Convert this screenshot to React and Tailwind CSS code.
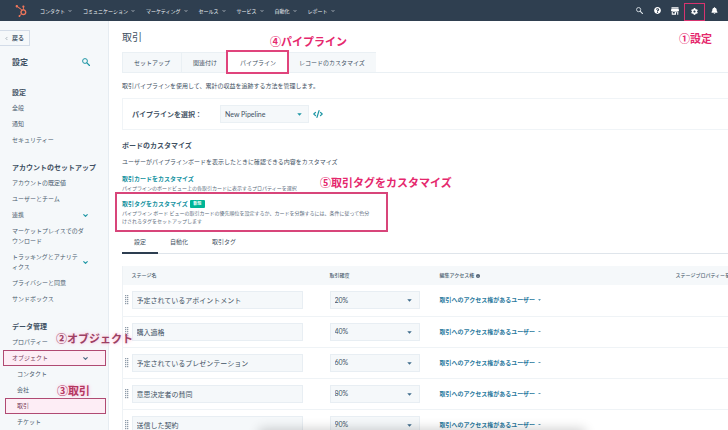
import React from "react";
import { FaHubspot, FaQuestionCircle, FaCog, FaBell } from "react-icons/fa";
import { ChevronDown, ChevronLeft, CodeXml } from "lucide-react";

const menus = [
  "コンタクト",
  "コミュニケーション",
  "マーケティング",
  "セールス",
  "サービス",
  "自動化",
  "レポート",
];

const sections = [
  {
    title: "設定",
    items: [{ label: "全般" }, { label: "通知" }, { label: "セキュリティー" }],
  },
  {
    title: "アカウントのセットアップ",
    items: [
      { label: "アカウントの既定値" },
      { label: "ユーザーとチーム" },
      { label: "連携", open: true },
      { label: "マーケットプレイスでのダウンロード" },
      { label: "トラッキングとアナリティクス", open: true },
      { label: "プライバシーと同意" },
      { label: "サンドボックス" },
    ],
  },
  {
    title: "データ管理",
    items: [
      { label: "プロパティー" },
      { label: "オブジェクト", open: true, marked: true },
      { label: "コンタクト", sub: true },
      { label: "会社", sub: true },
      { label: "取引", sub: true, marked: true },
      { label: "チケット", sub: true },
    ],
  },
];

const stages = [
  { name: "予定されているアポイントメント", probability: "20%" },
  { name: "購入適格", probability: "40%" },
  { name: "予定されているプレゼンテーション", probability: "60%" },
  { name: "意思決定者の賛同", probability: "80%" },
  { name: "送信した契約", probability: "90%" },
];

const Caret = ({ className }) => (
  <svg viewBox="0 0 10 6" className={className} fill="currentColor">
    <path d="M0.5 0.5h9L5 5.5z" />
  </svg>
);

const SearchIcon = ({ className }) => (
  <svg viewBox="0 0 16 16" className={className} fill="none" stroke="currentColor">
    <circle cx="6" cy="6" r="4.8" strokeWidth="2" />
    <path d="M9.8 9.8L15 15" strokeWidth="2.6" strokeLinecap="round" />
  </svg>
);

const StoreIcon = ({ className }) => (
  <svg viewBox="0 0 16 16" className={className} fill="currentColor">
    <path d="M1 0.5h14v2H1z" />
    <path d="M1 3h14l1 3.5a2 2 0 0 1-3.6 1.3 2.6 2.6 0 0 1-4.4 0 2.6 2.6 0 0 1-4.4 0A2 2 0 0 1 0 6.5z" />
    <path
      d="M1.5 9h13v6.500h-13z M3.500 10v3h4v-3z M10 10.500v5h2.500v-5z"
      fillRule="evenodd"
    />
  </svg>
);

const TopNav = () => (
  <header className="flex h-[21px] shrink-0 items-center bg-[#2f3f50] pl-[15px] pr-[5px]">
    <a href="#home" aria-label="HubSpot" className="w-[25px] text-[#f0765b]">
      <FaHubspot className="size-[12px]" />
    </a>
    <nav className="flex flex-1 gap-[11px]">
      {menus.map((menu) => (
        <button
          key={menu}
          className="flex items-center gap-[3px] whitespace-nowrap text-[5px] leading-[10px] text-[#eef2f5]"
        >
          {menu}
          <ChevronDown className="size-[4px]" strokeWidth={4} />
        </button>
      ))}
    </nav>
    <div className="flex items-center text-white">
      <button aria-label="検索" className="flex w-[18px] justify-center">
        <SearchIcon className="size-[7px] text-[#dde3e9]" />
      </button>
      <button aria-label="ヘルプ" className="flex w-[18px] justify-center">
        <FaQuestionCircle className="size-[7px]" />
      </button>
      <button aria-label="マーケットプレイス" className="flex w-[18px] justify-center">
        <StoreIcon className="size-[8px]" />
      </button>
      <button
        aria-label="設定"
        className="mt-[3px] flex h-[18px] w-[21px] items-center justify-center border border-[#d8336f] pb-[2px]"
      >
        <FaCog className="size-[7px]" />
      </button>
      <button aria-label="お知らせ" className="flex w-[18px] justify-center">
        <FaBell className="size-[7px]" />
      </button>
    </div>
  </header>
);

const SidebarItem = ({ item }) => (
  <li>
    <a
      href="#settings"
      className={`mr-[2px] flex items-center py-[3px] text-[6px] leading-[10px] ${
        item.sub ? "ml-[5px] pl-[12px]" : "ml-[3px] pl-[9px]"
      } ${
        item.marked
          ? "bg-[#fdedf5] text-[#7a3f5c] outline-[1px] -outline-offset-1 outline-[#b04a72] outline-solid"
          : "text-[#4a5c6e]"
      }`}
    >
      <span className={item.open ? "w-[70px] break-all" : "w-[75px] break-all"}>
        {item.label}
      </span>
      {item.open && (
        <ChevronDown
          className={`size-[7px] ${item.marked ? "text-[#4f6a86]" : "text-[#1f97a5]"}`}
          strokeWidth={4}
        />
      )}
    </a>
  </li>
);

const Sidebar = () => (
  <aside className="w-[109px] shrink-0 overflow-hidden border-r border-[#e6ecf1] bg-[#f5f8fa]">
    <button className="mt-[9px] flex h-[16px] w-[30px] items-center gap-[3px] border border-l-0 border-[#d3dce8] pl-[4px] text-[6px] leading-[10px] font-bold text-[#4a5c6e]">
      <ChevronLeft className="size-[5px]" strokeWidth={2} />
      戻る
    </button>
    <div className="mt-[10px] flex items-center justify-between pl-[12px] pr-[18px]">
      <h2 className="text-[8px] leading-[12px] font-bold text-[#3f5163]">設定</h2>
      <button aria-label="設定を検索">
        <SearchIcon className="size-[8px] text-[#1f97a5]" />
      </button>
    </div>
    <div className="mt-[16px] flex flex-col gap-[11px]">
      {sections.map((section) => (
        <section key={section.title}>
          <h3 className="pl-[12px] text-[7px] leading-[16px] font-bold whitespace-nowrap text-[#3f5163]">
            {section.title}
          </h3>
          <ul>
            {section.items.map((item) => (
              <SidebarItem key={item.label} item={item} />
            ))}
          </ul>
        </section>
      ))}
    </div>
  </aside>
);

const StageTable = () => (
  <table className="mt-[12px] w-full table-fixed border-l border-[#eef2f5] text-left whitespace-nowrap">
    <colgroup>
      <col className="w-[9px]" />
      <col className="w-[198px]" />
      <col className="w-[110px]" />
      <col className="w-[236px]" />
      <col />
    </colgroup>
    <thead className="bg-[#f5f8fa]">
      <tr className="h-[19px] text-[5px] text-[#4a5c6e]">
        <th />
        <th className="font-medium">ステージ名</th>
        <th className="font-medium">取引確度</th>
        <th className="font-medium">
          <span className="flex items-center gap-[2px]">
            編集アクセス権
            <svg viewBox="0 0 10 10" className="size-[4px]">
              <circle cx="5" cy="5" r="5" fill="#4a5c6e" />
              <path d="M5 4.5v3.5M5 2v1.2" stroke="#fff" strokeWidth="1.4" />
            </svg>
          </span>
        </th>
        <th className="font-medium">ステージプロパティーを</th>
      </tr>
    </thead>
    <tbody>
      {stages.map((stage) => (
        <tr key={stage.name} className="h-[31px] border-b border-[#eff3f6]">
          <td>
            <svg viewBox="0 0 4 10" className="ml-[2px] h-[10px] w-[4px]" fill="#8f9ca9">
              {[0, 2, 4, 6, 8].map((y) => (
                <g key={y}>
                  <rect x="0" y={y} width="1.3" height="1.2" />
                  <rect x="2" y={y} width="1.3" height="1.2" />
                </g>
              ))}
            </svg>
          </td>
          <td>
            <input
              aria-label="ステージ名"
              defaultValue={stage.name}
              className="block h-[18px] w-[171px] border border-[#e8eef3] bg-[#f5f8fa] px-[4px] text-[7px] text-[#3f5163]"
            />
          </td>
          <td>
            <div className="relative w-[90px]">
              <select
                aria-label="取引確度"
                className="block h-[18px] w-full appearance-none border border-[#e8eef3] bg-[#f5f8fa] px-[4px] text-[7px] text-[#3f5163]"
              >
                <option>{stage.probability}</option>
              </select>
              <Caret className="absolute top-[8px] right-[8px] w-[5px] text-[#3f6c8c]" />
            </div>
          </td>
          <td>
            <button className="flex items-center gap-[3px] text-[6px] leading-[10px] font-bold text-[#2b7a9e]">
              取引へのアクセス権があるユーザー
              <Caret className="w-[3px]" />
            </button>
          </td>
          <td />
        </tr>
      ))}
    </tbody>
  </table>
);

const Note = ({ children, className }) => (
  <p
    className={`pointer-events-none absolute font-['Noto_Sans_CJK_JP',sans-serif] text-[11px] leading-[16px] font-bold whitespace-nowrap ${className}`}
  >
    {children}
  </p>
);

const App = () => {
  return (
    <div className="relative flex h-screen flex-col overflow-hidden bg-white font-['Lato','Noto_Sans_CJK_JP',sans-serif] text-[#3f5163]">
      <TopNav />
      <div className="flex min-h-0 flex-1">
        <Sidebar />
        <main className="min-w-0 flex-1 overflow-hidden pl-[13px]">
          <h1 className="mt-[8px] text-[10px] leading-[16px]">取引</h1>

          <div className="mt-[7px] flex border-b border-[#eaf0f4] text-[6px]">
            {["セットアップ", "関連付け", "パイプライン", "レコードのカスタマイズ"].map((tab) => (
              <button
                key={tab}
                className={`h-[20px] border-t border-l px-[11px] whitespace-nowrap ${
                  tab === "パイプライン"
                    ? "relative z-10 border-white bg-white outline-2 outline-[#e0447c]"
                    : "border-[#eaf0f4] bg-[#f5f8fa]"
                }`}
              >
                {tab}
              </button>
            ))}
          </div>

          <p className="mt-[7px] text-[6px] leading-[12px]">
            取引パイプラインを使用して、累計の収益を追跡する方法を管理します。
          </p>

          <div className="mt-[6px] flex items-center border border-r-0 border-[#f0f4f7] py-[6px] pl-[9px]">
            <label htmlFor="pipeline" className="w-[88px] text-[7px] font-bold">
              パイプラインを選択：
            </label>
            <div className="relative w-[89px]">
              <select
                id="pipeline"
                className="block h-[18px] w-full appearance-none border border-[#eaf0f4] bg-[#f5f8fa] px-[4px] text-[7px]"
              >
                <option>New Pipeline</option>
              </select>
              <Caret className="absolute top-[8px] right-[7px] w-[5px] text-[#1f97a5]" />
            </div>
            <button aria-label="コード" className="ml-[4px] text-[#1f97a5]">
              <CodeXml className="size-[10px]" strokeWidth={3} />
            </button>
          </div>

          <h2 className="mt-[9px] text-[7px] leading-[12px] font-bold">
            ボードのカスタマイズ
          </h2>
          <p className="mt-[5px] text-[6px] leading-[12px]">
            ユーザーがパイプラインボードを表示したときに確認できる内容をカスタマイズ
          </p>

          <a
            href="#cards"
            className="mt-[6px] block text-[6px] leading-[10px] font-bold text-[#14929f]"
          >
            取引カードをカスタマイズ
          </a>
          <p className="text-[5px] leading-[8px] text-[#5c6d7e]">
            パイプラインのボードビュー上の各取引カードに表示するプロパティーを選択
          </p>

          <div className="mt-[7px] w-[259px] outline-2 outline-offset-[5px] outline-[#d8457a]">
            <div className="flex items-center gap-[2px] leading-[10px] font-bold">
              <a href="#tags" className="text-[6px] text-[#14929f]">
                取引タグをカスタマイズ
              </a>
              <span className="w-[15px] rounded-[1px] bg-[#00b596] text-center text-[4px] leading-[8px] text-white">
                新規
              </span>
            </div>
            <p className="pr-[9px] text-[5px] leading-[8px] text-[#5c6d7e]">
              パイプライン ボード ビューの取引カードの優先順位を設定するか、カードを分類するには、条件に従って色分けされるタグをセットアップします
            </p>
          </div>

          <div className="mt-[6px] flex border-b border-[#dfe5eb] text-[6px] leading-[12px]">
            {["設定", "自動化", "取引タグ"].map((tab) => (
              <button
                key={tab}
                className={`-mb-px border-b-2 px-[12px] pt-[5px] pb-[4px] ${
                  tab === "設定" ? "border-[#2d3e50]" : "border-transparent"
                }`}
              >
                {tab}
              </button>
            ))}
          </div>

          <StageTable />
        </main>
      </div>

      <Note className="top-[30px] right-[16px] text-[#e5276d]">①設定</Note>
      <Note className="top-[330px] left-[56px] text-[#9c3f63] [text-shadow:0_0_3px_#ffc4dd,0_0_5px_#ffd9ea]">
        ②オブジェクト
      </Note>
      <Note className="top-[382px] left-[57px] text-[#b3365f] [text-shadow:0_0_3px_#ffc4dd,0_0_5px_#ffd9ea]">
        ③取引
      </Note>
      <Note className="top-[33px] left-[270px] text-[#e5276d]">④パイプライン</Note>
      <Note className="top-[174px] left-[320px] text-[#e5276d]">
        ⑤取引タグをカスタマイズ
      </Note>

      <div className="pointer-events-none absolute right-[20%] -bottom-[8px] left-[36%] h-[6px] shadow-[0_0_12px_3px_rgba(0,0,0,0.2)]" />
    </div>
  );
};

export default App;
